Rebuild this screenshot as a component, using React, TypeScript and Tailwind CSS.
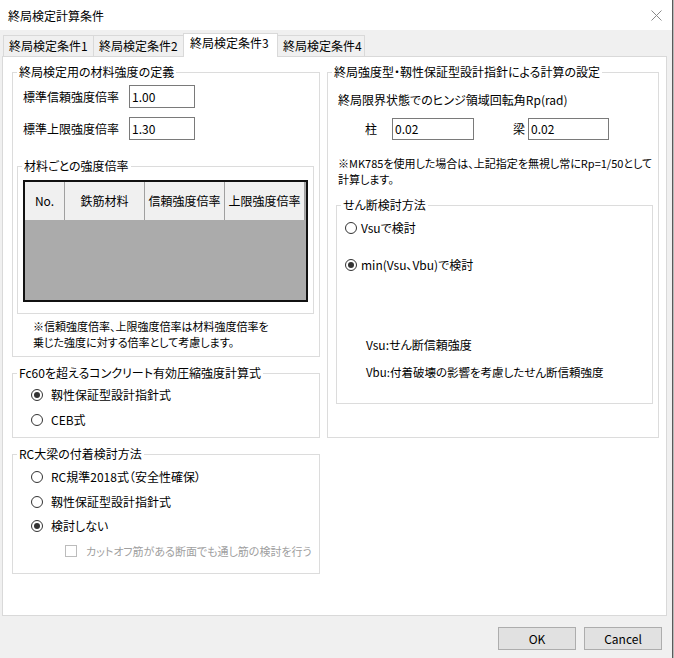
import React from 'react';

const font = "font-['Noto_Sans_CJK_JP',sans-serif] [font-feature-settings:'palt'] text-[12px] leading-[16px] text-black";

type RadioProps = { checked?: boolean; label: string; gap?: string };

const Radio: React.FC<RadioProps> = ({ checked, label, gap = 'ml-[8px]' }) => (
    <div className="flex items-center h-[16px] whitespace-nowrap">
        <span className="w-[12px] h-[12px] rounded-full border border-[#333333] bg-white flex items-center justify-center shrink-0">
            {checked && <span className="w-[6px] h-[6px] rounded-full bg-[#333333]" />}
        </span>
        <span className={gap}>{label}</span>
    </div>
);

const Legend: React.FC<{ text: string }> = ({ text }) => (
    <legend className="ml-[4px] px-[2px] leading-[14px] whitespace-nowrap">{text}</legend>
);

const TextBox: React.FC<{ value: string; w: string; h?: string }> = ({ value, w, h = 'h-[23px]' }) => (
    <div className={`${w} ${h} border border-[#7a7a7a] bg-white pl-[2px] flex items-center`}>{value}</div>
);

const Tab: React.FC<{ label: string; selected?: boolean; w: string }> = ({ label, selected, w }) =>
    selected ? (
        <div className={`${w} h-[24px] -ml-px -mb-px relative z-10 bg-white border border-b-0 border-[#d9d9d9] pl-[6px] pt-[1px]`}>
            {label}
        </div>
    ) : (
        <div className={`${w} h-[21px] -ml-px bg-[#f0f0f0] border border-b-0 border-[#d9d9d9] pl-[5px] pt-[2px]`}>
            {label}
        </div>
    );

export default function App() {
    return (
        <div className={`${font} w-[674px] h-[658px] flex bg-[#f0f0f0] overflow-hidden`}>
            <div className="w-[672px] h-full flex flex-col">
                {/* title bar */}
                <div className="h-[30px] bg-white flex items-center justify-between pl-[8px] pr-[10px] shrink-0">
                    <span className="pt-[1px]">終局検定計算条件</span>
                    <svg width="11" height="11" viewBox="0 0 11 11">
                        <path d="M0.5 0.5L10.5 10.5M10.5 0.5L0.5 10.5" stroke="#8a8a8a" strokeWidth="1" />
                    </svg>
                </div>

                {/* tabs */}
                <div className="h-[26px] flex items-end pl-[4px] shrink-0">
                    <Tab label="終局検定条件1" w="w-[91px]" />
                    <Tab label="終局検定条件2" w="w-[91px]" />
                    <Tab label="終局検定条件3" w="w-[95px]" selected />
                    <Tab label="終局検定条件4" w="w-[88px]" />
                </div>

                {/* panel */}
                <div className="ml-[2px] w-[665px] h-[560px] border border-[#d9d9d9] bg-white pt-[8px] pl-[9px] flex gap-[7px] shrink-0">
                    {/* left column */}
                    <div className="w-[308px] flex flex-col">
                        <fieldset className="min-w-0 border border-[#dcdcdc] pb-[6px]">
                            <Legend text="終局検定用の材料強度の定義" />
                            <div className="mt-[6px] flex items-center pl-[10px]">
                                <span className="w-[106px]">標準信頼強度倍率</span>
                                <TextBox value="1.00" w="w-[66px]" />
                            </div>
                            <div className="mt-[9px] flex items-center pl-[10px]">
                                <span className="w-[106px]">標準上限強度倍率</span>
                                <TextBox value="1.30" w="w-[66px]" />
                            </div>
                            <fieldset className="min-w-0 mt-[19px] ml-[4px] mr-[5px] border border-[#dcdcdc] pb-[11px]">
                                <Legend text="材料ごとの強度倍率" />
                                <div className="mt-[7px] ml-[5px] mr-[5px] h-[122px] border-2 border-[#111111] bg-[#ababab] flex flex-col">
                                    <div className="h-[38px] flex bg-[#f0f0f0]">
                                        <div className="w-[40px] border-r border-[#a0a0a0] flex items-center justify-center">No.</div>
                                        <div className="w-[80px] border-r border-[#a0a0a0] flex items-center justify-center">鉄筋材料</div>
                                        <div className="w-[80px] border-r border-[#a0a0a0] flex items-center justify-center">信頼強度倍率</div>
                                        <div className="w-[80px] border-r border-[#a0a0a0] flex items-center justify-center">上限強度倍率</div>
                                        <div className="flex-1 bg-[#ababab]" />
                                    </div>
                                </div>
                            </fieldset>
                            <div className="mt-[4px] pl-[20px] whitespace-nowrap text-[11px]">
                                <div>※信頼強度倍率、上限強度倍率は材料強度倍率を</div>
                                <div>乗じた強度に対する倍率として考慮します。</div>
                            </div>
                        </fieldset>

                        <fieldset className="min-w-0 mt-[9px] border border-[#dcdcdc] pb-[9px]">
                            <Legend text="Fc60を超えるコンクリート有効圧縮強度計算式" />
                            <div className="mt-[7px] pl-[18px]">
                                <Radio checked label="靱性保証型設計指針式" />
                            </div>
                            <div className="mt-[9px] pl-[18px]">
                                <Radio label="CEB式" />
                            </div>
                        </fieldset>

                        <fieldset className="min-w-0 mt-[9px] border border-[#dcdcdc] pb-[14px]">
                            <Legend text="RC大梁の付着検討方法" />
                            <div className="mt-[8px] pl-[18px]">
                                <Radio label="RC規準2018式（安全性確保）" />
                            </div>
                            <div className="mt-[9px] pl-[18px]">
                                <Radio label="靱性保証型設計指針式" />
                            </div>
                            <div className="mt-[8px] pl-[18px]">
                                <Radio checked label="検討しない" />
                            </div>
                            <div className="mt-[9px] h-[16px] flex items-center pl-[52px] text-[#a0a0a0] whitespace-nowrap">
                                <span className="w-[12px] h-[12px] border border-[#bcbcbc] bg-white shrink-0" />
                                <span className="ml-[9px] text-[11px]">カットオフ筋がある断面でも通し筋の検討を行う</span>
                            </div>
                        </fieldset>
                    </div>

                    {/* right column */}
                    <div className="w-[332px] flex flex-col">
                        <fieldset className="min-w-0 border border-[#dcdcdc] pb-[33px]">
                            <Legend text="終局強度型・靱性保証型設計指針による計算の設定" />
                            <div className="mt-[13px] pl-[10px]">終局限界状態でのヒンジ領域回転角Rp(rad)</div>
                            <div className="mt-[10px] flex items-center">
                                <span className="ml-[37px]">柱</span>
                                <div className="ml-[15px]">
                                    <TextBox value="0.02" w="w-[82px]" h="h-[22px]" />
                                </div>
                                <span className="ml-[39px]">梁</span>
                                <div className="ml-[3px]">
                                    <TextBox value="0.02" w="w-[81px]" h="h-[22px]" />
                                </div>
                            </div>
                            <div className="mt-[15px] pl-[10px] text-[11px] leading-[16px] whitespace-nowrap">
                                <div>※MK785を使用した場合は、上記指定を無視し常にRp=1/50として</div>
                                <div>計算します。</div>
                            </div>
                            <fieldset className="min-w-0 mt-[11px] ml-[8px] mr-[5px] border border-[#dcdcdc] pb-[23px]">
                                <Legend text="せん断検討方法" />
                                <div className="mt-[8px] pl-[8px]">
                                    <Radio label="Vsuで検討" gap="ml-[4px]" />
                                </div>
                                <div className="mt-[21px] pl-[8px]">
                                    <Radio checked label="min(Vsu、Vbu)で検討" gap="ml-[4px]" />
                                </div>
                                <div className="mt-[64px] pl-[29px]">Vsu:せん断信頼強度</div>
                                <div className="mt-[11px] pl-[29px] text-[11.5px] whitespace-nowrap">Vbu:付着破壊の影響を考慮したせん断信頼強度</div>
                            </fieldset>
                        </fieldset>
                    </div>
                </div>

                {/* buttons */}
                <div className="mt-[11px] flex justify-end gap-[8px] pr-[10px]">
                    <button className="w-[78px] h-[23px] bg-[#e1e1e1] border border-[#adadad] flex items-center justify-center">OK</button>
                    <button className="w-[78px] h-[23px] bg-[#e1e1e1] border border-[#adadad] flex items-center justify-center">Cancel</button>
                </div>
            </div>
            <div className="w-[2px] h-full border-l border-[#5a5a5a] bg-[#b8b8b8]" />
        </div>
    );
}
